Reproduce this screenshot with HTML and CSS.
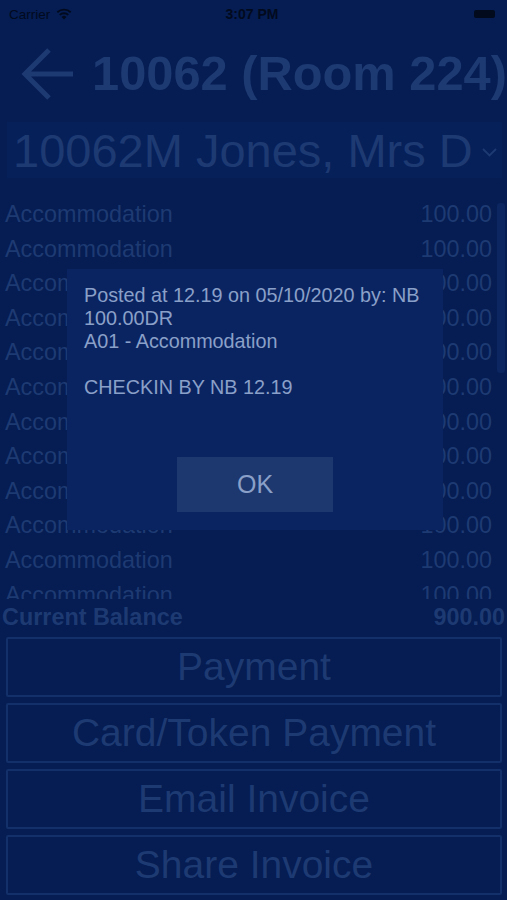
FILE: index.html
```html
<!DOCTYPE html>
<html lang="en">
<head>
    <meta charset="UTF-8">
    <meta name="viewport" content="width=device-width, initial-scale=1.0">
    <title>Folio 10062</title>
    <link rel="stylesheet" href="styles.css">
</head>
<body>
    <div class="screen">
        <div class="status-bar">
            <div class="carrier">
                Carrier
                <svg class="wifi" width="16" height="12" viewBox="0 0 16 12">
                    <path d="M8 11.5 L5.6 8.9 A3.6 3.6 0 0 1 10.4 8.9 Z" fill="#020a1e"/>
                    <path d="M3.7 6.9 A6.3 6.3 0 0 1 12.3 6.9" stroke="#020a1e" stroke-width="1.9" fill="none"/>
                    <path d="M1.3 4.3 A9.6 9.6 0 0 1 14.7 4.3" stroke="#020a1e" stroke-width="1.9" fill="none"/>
                </svg>
            </div>
            <div class="clock">3:07 PM</div>
            <div class="battery"></div>
        </div>

        <div class="header">
            <svg class="back" width="54" height="54" viewBox="0 0 54 54">
                <path d="M52 27 H5 M28 3 L4 27 L28 51" stroke="#1e3a73" stroke-width="5" fill="none"/>
            </svg>
            <h1>10062 (Room 224)</h1>
        </div>

        <div class="picker">
            <span>10062M Jones, Mrs D</span>
            <svg class="chevron" width="15" height="9" viewBox="0 0 15 9">
                <path d="M1 1 L7.5 7.5 L14 1" stroke="#1e3a73" stroke-width="1.8" fill="none"/>
            </svg>
        </div>

        <div class="list">
            <div class="list-rows">
                <div class="row"><span>Accommodation</span><span>100.00</span></div>
                <div class="row"><span>Accommodation</span><span>100.00</span></div>
                <div class="row"><span>Accommodation</span><span>100.00</span></div>
                <div class="row"><span>Accommodation</span><span>100.00</span></div>
                <div class="row"><span>Accommodation</span><span>100.00</span></div>
                <div class="row"><span>Accommodation</span><span>100.00</span></div>
                <div class="row"><span>Accommodation</span><span>100.00</span></div>
                <div class="row"><span>Accommodation</span><span>100.00</span></div>
                <div class="row"><span>Accommodation</span><span>100.00</span></div>
                <div class="row"><span>Accommodation</span><span>100.00</span></div>
                <div class="row"><span>Accommodation</span><span>100.00</span></div>
                <div class="row"><span>Accommodation</span><span>100.00</span></div>
            </div>
            <div class="scrollbar"></div>
        </div>

        <div class="balance">
            <span>Current Balance</span>
            <span>900.00</span>
        </div>

        <div class="actions">
            <button class="action">Payment</button>
            <button class="action">Card/Token Payment</button>
            <button class="action">Email Invoice</button>
            <button class="action">Share Invoice</button>
        </div>

        <div class="dialog">
            <div class="dialog-text">
                Posted at 12.19 on 05/10/2020 by: NB<br>
                100.00DR<br>
                A01 - Accommodation<br>
                <br>
                CHECKIN BY NB 12.19
            </div>
            <button class="ok">OK</button>
        </div>
    </div>
</body>
</html>
```

FILE: styles.css
```css
body {
    margin: 0;
    background-color: #051d52;
    font-family: "Liberation Sans", Arial, sans-serif;
}
.screen {
    position: relative;
    width: 507px;
    height: 900px;
    overflow: hidden;
    color: #1e3a73;
}
.status-bar {
    height: 28px;
    display: flex;
    align-items: center;
    justify-content: space-between;
    padding: 0 12px 0 9px;
    font-size: 13.5px;
    color: #020a1e;
}
.carrier {
    display: flex;
    align-items: center;
    gap: 6px;
    width: 100px;
}
.clock {
    font-size: 14px;
    font-weight: bold;
}
.battery {
    width: 21px;
    height: 8px;
    margin-left: 79px;
    background: #020a1e;
    border-radius: 2px;
}
.header {
    height: 92px;
    display: flex;
    align-items: center;
    padding-left: 21px;
    gap: 17px;
}
.header h1 {
    margin: 0 0 2px;
    font-size: 48.8px;
    font-weight: bold;
    white-space: nowrap;
}
.picker {
    height: 56px;
    margin: 2px 5px 0 7px;
    padding: 0 5px 0 6px;
    background: #06205a;
    display: flex;
    align-items: center;
    justify-content: space-between;
    font-size: 47px;
    white-space: nowrap;
}
.chevron {
    margin-top: 4px;
}
.list {
    position: relative;
    height: 402px;
    margin-top: 19px;
    overflow: hidden;
}
.list-rows {
    padding: 0 15px 0 5px;
}
.row {
    display: flex;
    justify-content: space-between;
    height: 34.6px;
    line-height: 34.6px;
    font-size: 23.4px;
}
.scrollbar {
    position: absolute;
    right: 2px;
    top: 6px;
    width: 8px;
    height: 170px;
    background: #0b2660;
    border-radius: 3px;
}
.balance {
    height: 36px;
    display: flex;
    align-items: center;
    justify-content: space-between;
    padding: 0 2px;
    font-size: 23.4px;
    font-weight: bold;
}
.actions {
    display: flex;
    flex-direction: column;
    gap: 6px;
    padding: 2px 5px 0 6px;
}
.action {
    height: 60px;
    background: transparent;
    border: 2px solid #14306a;
    border-radius: 2px;
    font-family: inherit;
    font-size: 39px;
    color: #1e3a73;
}
.dialog {
    position: absolute;
    left: 67px;
    top: 269px;
    width: 376px;
    height: 261px;
    box-sizing: border-box;
    padding: 15px 17px 18px;
    background: #0a2462;
    display: flex;
    flex-direction: column;
    align-items: center;
}
.dialog-text {
    align-self: stretch;
    font-size: 19.8px;
    line-height: 23px;
    color: #8aa0c8;
    white-space: nowrap;
}
.ok {
    margin-top: auto;
    width: 156px;
    height: 55px;
    border: none;
    background: #1d386f;
    font-family: inherit;
    font-size: 25px;
    color: #8aa0c8;
}
```
